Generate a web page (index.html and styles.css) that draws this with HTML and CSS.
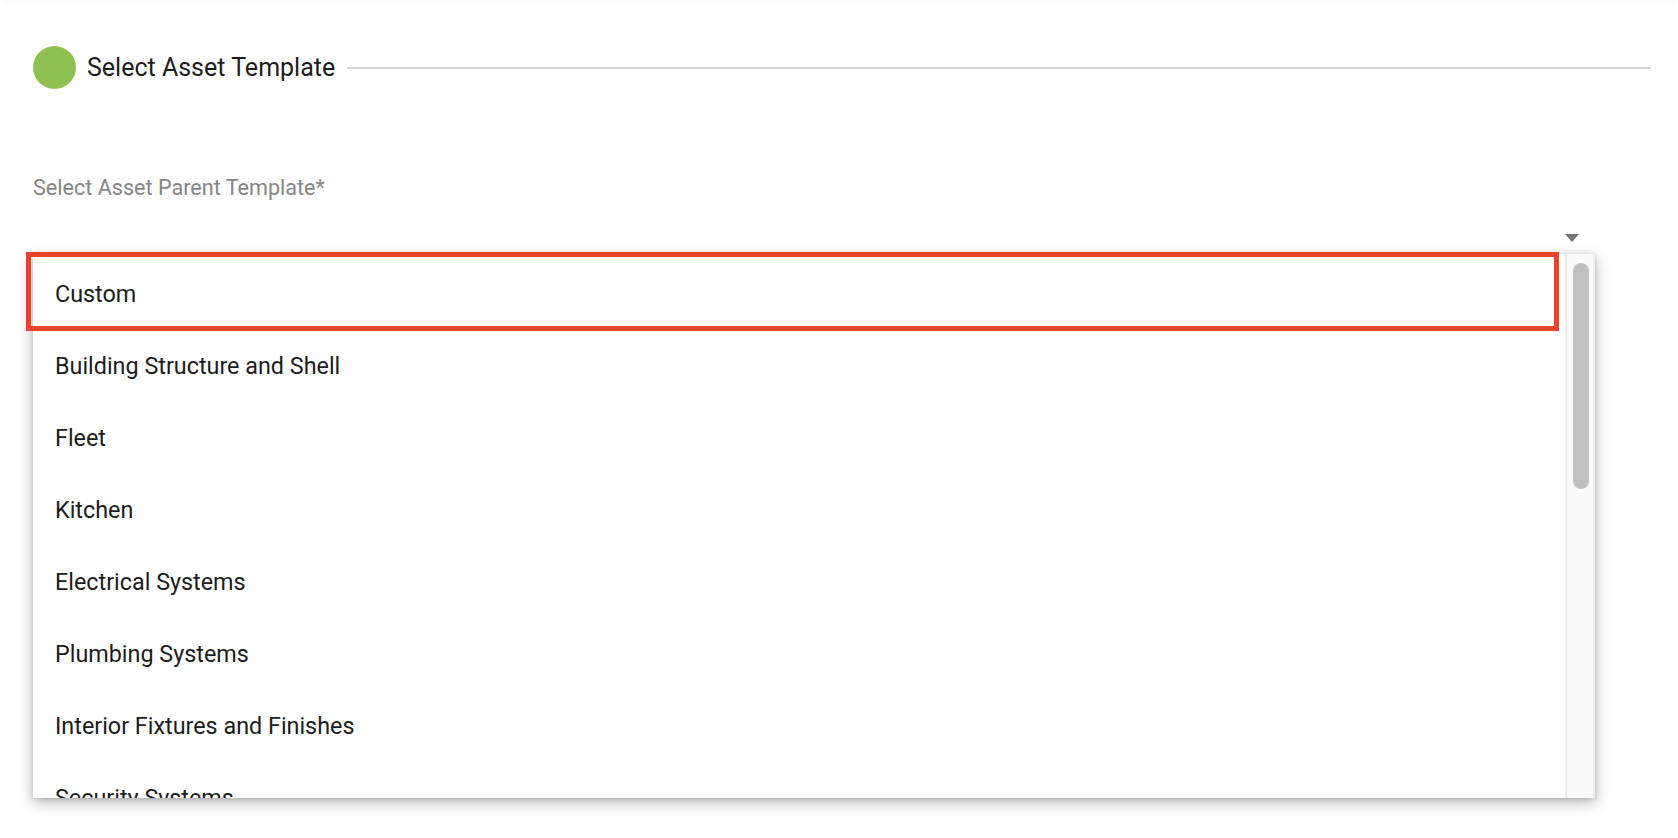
FILE: index.html
```html
<!DOCTYPE html>
<html>
<head>
<meta charset="utf-8">
<link rel="stylesheet" href="styles.css">
</head>
<body>
<div class="topbar"></div>
<main class="page">
  <div class="section-head">
    <span class="dot"></span>
    <span class="section-title">Select Asset Template</span>
    <span class="rule"></span>
  </div>
  <div class="field">
    <div class="field-label">Select Asset Parent Template*</div>
    <div class="field-control">
      <span class="caret"></span>
    </div>
    <div class="menu">
      <ul class="menu-list">
        <li class="menu-item">Custom</li>
        <li class="menu-item">Building Structure and Shell</li>
        <li class="menu-item">Fleet</li>
        <li class="menu-item">Kitchen</li>
        <li class="menu-item">Electrical Systems</li>
        <li class="menu-item">Plumbing Systems</li>
        <li class="menu-item">Interior Fixtures and Finishes</li>
        <li class="menu-item">Security Systems</li>
      </ul>
      <div class="scroll-track"><div class="scroll-thumb"></div></div>
    </div>
    <div class="highlight"></div>
  </div>
</main>
</body>
</html>
```
FILE: styles.css
```css
* { box-sizing: border-box; }
html {
  overflow: hidden;
}
body {
  margin: 0;
  padding: 0;
  min-height: 838px;
  background: #ffffff;
  font-family: Roboto, "Liberation Sans", Arial, sans-serif;
  color: rgba(0,0,0,0.87);
}
.topbar {
  height: 1px;
  margin-top: -1px;
  box-shadow: 0 1px 8px rgba(0,0,0,0.18);
}
.page {
  padding: 0 27px 0 33px;
}
.section-head {
  display: flex;
  align-items: center;
  height: 43px;
  margin-top: 46px;
}
.dot {
  width: 43px;
  height: 43px;
  border-radius: 50%;
  background: #8fc151;
  flex: none;
}
.section-title {
  font-size: 25px;
  margin-left: 11px;
  color: #1d1d1d;
  white-space: nowrap;
}
.rule {
  flex: 1;
  height: 2px;
  background: #d6d6d6;
  margin-left: 12px;
}
.field {
  position: relative;
  margin-top: 86px;
}
.field-label {
  font-size: 21.6px;
  color: #858585;
  line-height: 26px;
}
.field-control {
  height: 50px;
  display: flex;
  justify-content: flex-end;
  align-items: flex-start;
  padding: 33px 72px 0 0;
}
.caret {
  width: 0;
  height: 0;
  border-left: 7px solid transparent;
  border-right: 7px solid transparent;
  border-top: 8px solid #757575;
}
.menu {
  position: absolute;
  top: 79px;
  left: 0;
  width: 1562px;
  height: 544px;
  background: #fff;
  display: flex;
  box-shadow: 0 4px 14px rgba(0,0,0,0.3), 0 1px 4px rgba(0,0,0,0.12);
  overflow: hidden;
  z-index: 1;
}
.menu-list {
  list-style: none;
  margin: 0;
  padding: 4px 0 0 0;
  flex: 1;
  overflow: hidden;
}
.menu-item {
  height: 72px;
  line-height: 72px;
  padding-left: 22px;
  font-size: 23.35px;
  color: #1c1c1c;
  white-space: nowrap;
}
.scroll-track {
  width: 30px;
  flex: none;
  background: #fafafa;
  border-left: 2px solid #ececec;
  border-right: 2px solid #f0f0f0;
  padding: 9px 4px 0 6px;
}
.scroll-thumb {
  height: 226px;
  border-radius: 8px;
  background: #c1c1c1;
}
.highlight {
  position: absolute;
  left: -7px;
  top: 77px;
  width: 1533px;
  height: 79px;
  border: 5px solid #e9432b;
  pointer-events: none;
  z-index: 2;
}
```
